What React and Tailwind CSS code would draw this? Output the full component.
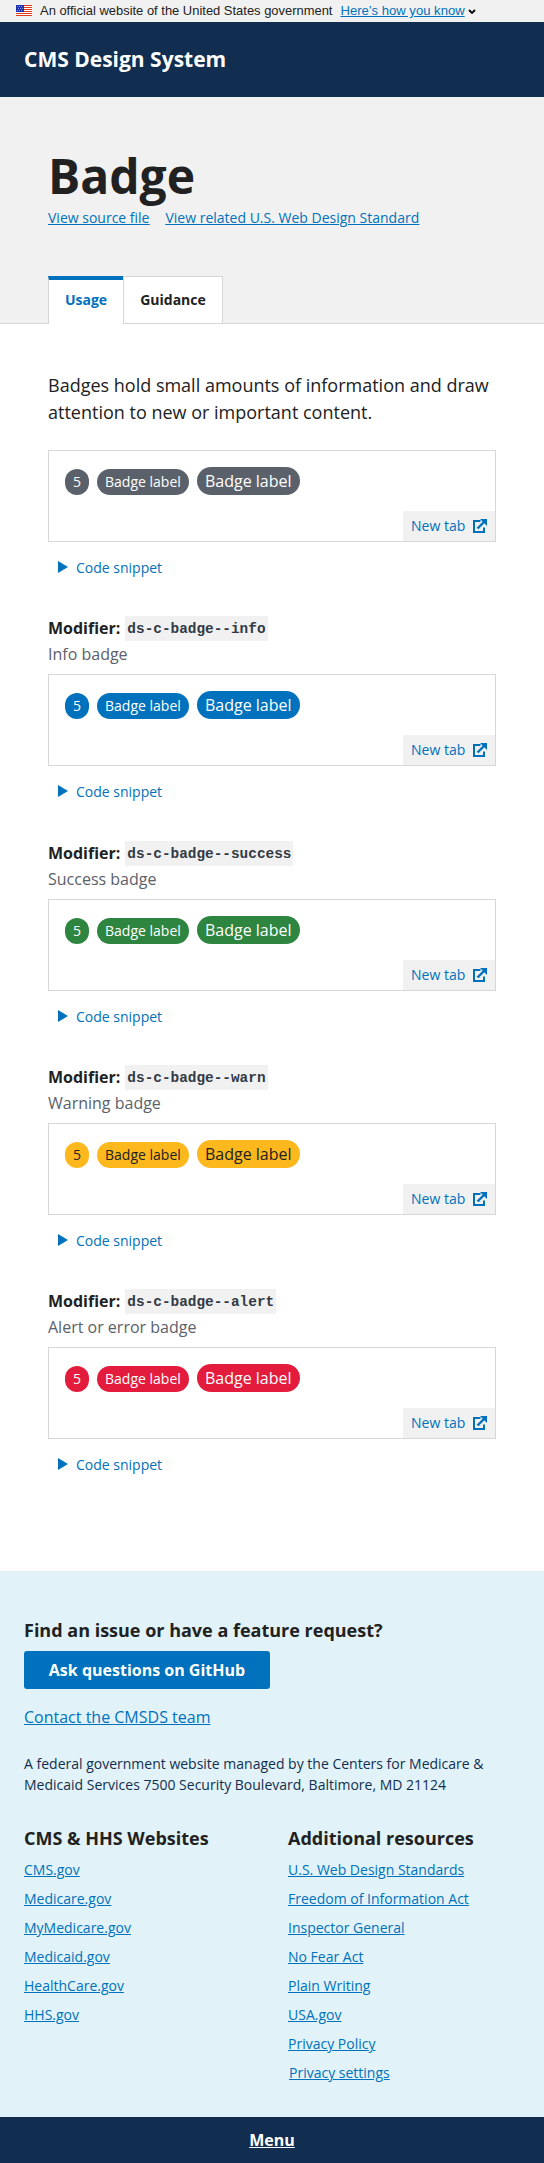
import React from "react";

const examples = [
  { title: null, tone: "bg-[#5b616b] text-white" },
  { modifier: "ds-c-badge--info", title: "Info badge", tone: "bg-[#0071bc] text-white" },
  { modifier: "ds-c-badge--success", title: "Success badge", tone: "bg-[#2e8540] text-white", spacing: "mt-px" },
  { modifier: "ds-c-badge--warn", title: "Warning badge", tone: "bg-[#fdb81e] text-[#212121]" },
  { modifier: "ds-c-badge--alert", title: "Alert or error badge", tone: "bg-[#e31c3d] text-white" },
];

const cmsLinks = ["CMS.gov", "Medicare.gov", "MyMedicare.gov", "Medicaid.gov", "HealthCare.gov", "HHS.gov"];
const resourceLinks = [
  "U.S. Web Design Standards",
  "Freedom of Information Act",
  "Inspector General",
  "No Fear Act",
  "Plain Writing",
  "USA.gov",
  "Privacy Policy",
];

function Flag() {
  return (
    <svg width="16" height="11" viewBox="0 0 16 11" shapeRendering="crispEdges">
      <rect width="16" height="11" fill="#fff" />
      {[0, 2, 4, 6, 8, 10].map((y) => (
        <rect key={y} y={y} width="16" height="1" fill="#e0391c" />
      ))}
      <rect width="8" height="7" fill="#1e33b1" />
      <g fill="#fff" shapeRendering="auto">
        {[1, 3, 5].map((y, r) =>
          [1, 3, 5].map((x) => <circle key={`${x}-${y}`} cx={x + 0.5 + (r % 2)} cy={y + 0.5} r="0.45" />)
        )}
      </g>
    </svg>
  );
}

function NewTabIcon() {
  return (
    <svg width="14" height="14" viewBox="0 0 14 14" fill="none" stroke="#0071bc">
      <path d="M7.5 2H1V13H11V8.5" strokeWidth="2" />
      <path d="M4.5 9.5L11 3" strokeWidth="2.4" />
      <path d="M7 0H14V7Z" fill="#0071bc" stroke="none" />
    </svg>
  );
}

function Example({ modifier, title, tone, spacing = "" }) {
  return (
    <section className={spacing}>
      {modifier && (
        <div className="h-[58px]">
          <h2 className="flex h-[25px] items-center text-[16px] font-bold leading-[25px]">
            Modifier:
            <code className="ml-[5px] h-[25px] bg-[#f1f1f1] px-[2px] font-['Liberation_Mono',monospace] text-[14.4px] leading-[27px] text-[#323a45]">
              {modifier}
            </code>
          </h2>
          <p className="text-[16px] leading-[27px] text-[#5b616b]">{title}</p>
        </div>
      )}
      <div className="flex h-[92px] flex-col justify-between border border-[#d6d7d9] pl-4 pt-4">
        <div className="flex items-end gap-2 font-medium">
          <span className={`h-[26px] rounded-[13px] px-2 text-[14px] leading-[26px] ${tone}`}>5</span>
          <span className={`h-[26px] rounded-[13px] px-2 text-[14px] leading-[26px] ${tone}`}>Badge label</span>
          <span className={`h-[28px] w-[103px] rounded-[14px] text-center text-[16px] leading-[28px] ${tone}`}>
            Badge label
          </span>
        </div>
        <a className="flex h-[30px] w-[92px] items-center justify-between self-end bg-[#f1f1f1] px-2 text-[14px] leading-[30px] text-[#0071bc]">
          <span className="h-[30px]">New tab</span>
          <NewTabIcon />
        </a>
      </div>
      <div className="mt-[14px] mb-px flex h-[22px] items-center pl-[10px] text-[14px] text-[#0071bc]">
        <svg width="10" height="12" viewBox="0 0 10 12" className="mr-2">
          <path d="M0 0L10 6L0 12Z" fill="#0071bc" />
        </svg>
        Code snippet
      </div>
    </section>
  );
}

export default function App() {
  return (
    <div className="h-[2163px] w-[544px] overflow-hidden bg-white font-['Open_Sans',sans-serif] text-[#212121]">
      <div className="flex h-[22px] items-center bg-[#f1f1f1] pl-4 pb-[2px] font-['Liberation_Sans',sans-serif] text-[12.95px]">
        <Flag />
        <span className="ml-2 pt-[2px]">An official website of the United States government</span>
        <a className="ml-2 pt-[2px] text-[13.1px] text-[#0071bc] underline">Here’s how you know</a>
        <svg width="8" height="5" viewBox="0 0 8 5" className="ml-[3px] mt-[3px]">
          <path d="M1 1L4 4L7 1" fill="none" stroke="#000" strokeWidth="1.8" />
        </svg>
      </div>
      <header className="flex h-[75px] items-center bg-[#112e51] pl-6 text-[21px] font-bold text-white">
        CMS Design System
      </header>
      <div className="flex h-[227px] flex-col border-b border-[#d6d7d9] bg-[#f1f1f1] px-12 pt-[48px]">
        <h1 className="text-[48px] font-bold leading-[62px]">Badge</h1>
        <div className="flex gap-4 text-[14px] leading-[21px] text-[#0071bc] underline">
          <a>View source file</a>
          <a>View related U.S. Web Design Standard</a>
        </div>
        <div className="mt-auto -mb-px flex h-[48px] text-[14px] font-bold">
          <div className="flex w-[75px] items-center justify-center border-l border-t-4 border-l-[#d6d7d9] border-t-[#0071bc] bg-white pb-[5px] text-[#0071bc]">
            Usage
          </div>
          <div className="flex w-[100px] items-center justify-center border border-[#d6d7d9] bg-white pb-px">
            Guidance
          </div>
        </div>
      </div>
      <main className="h-[1247px] px-12 pt-[48px]">
        <p className="mb-[24px] text-[18px] leading-[27px]">
          Badges hold small amounts of information and draw attention to new or important content.
        </p>
        <div className="flex flex-col gap-[37px]">
          {examples.map((e) => (
            <Example key={e.tone} {...e} />
          ))}
        </div>
      </main>
      <footer>
        <div className="h-[546px] bg-[#e1f3f8] px-6 pt-[46px]">
          <h2 className="text-[18px] font-bold leading-[26px]">Find an issue or have a feature request?</h2>
          <a className="mt-[8px] flex h-[38px] w-[246px] items-center justify-center rounded-[3px] bg-[#0071bc] text-[16px] font-bold text-white">
            Ask questions on GitHub
          </a>
          <a className="mt-4 block text-[16px] leading-6 text-[#0071bc] underline">Contact the CMSDS team</a>
          <p className="mt-6 text-[14px] leading-[21px] text-[#112e51]">
            A federal government website managed by the Centers for Medicare & Medicaid Services 7500 Security
            Boulevard, Baltimore, MD 21124
          </p>
          <div className="mt-[31px] grid grid-cols-[264px_1fr]">
            {[
              ["CMS & HHS Websites", cmsLinks],
              ["Additional resources", resourceLinks],
            ].map(([heading, links]) => (
              <div key={heading}>
                <h2 className="mb-[9px] text-[18px] font-bold leading-[24px]">{heading}</h2>
                <ul className="flex flex-col gap-2 text-[14px] leading-[21px] text-[#0071bc] underline">
                  {links.map((l) => (
                    <li key={l}>{l}</li>
                  ))}
                  {links === resourceLinks && <li className="pl-px">Privacy settings</li>}
                </ul>
              </div>
            ))}
          </div>
        </div>
        <div className="flex h-[46px] items-center justify-center bg-[#112e51] text-[16px] font-bold text-white underline">
          Menu
        </div>
      </footer>
    </div>
  );
}
